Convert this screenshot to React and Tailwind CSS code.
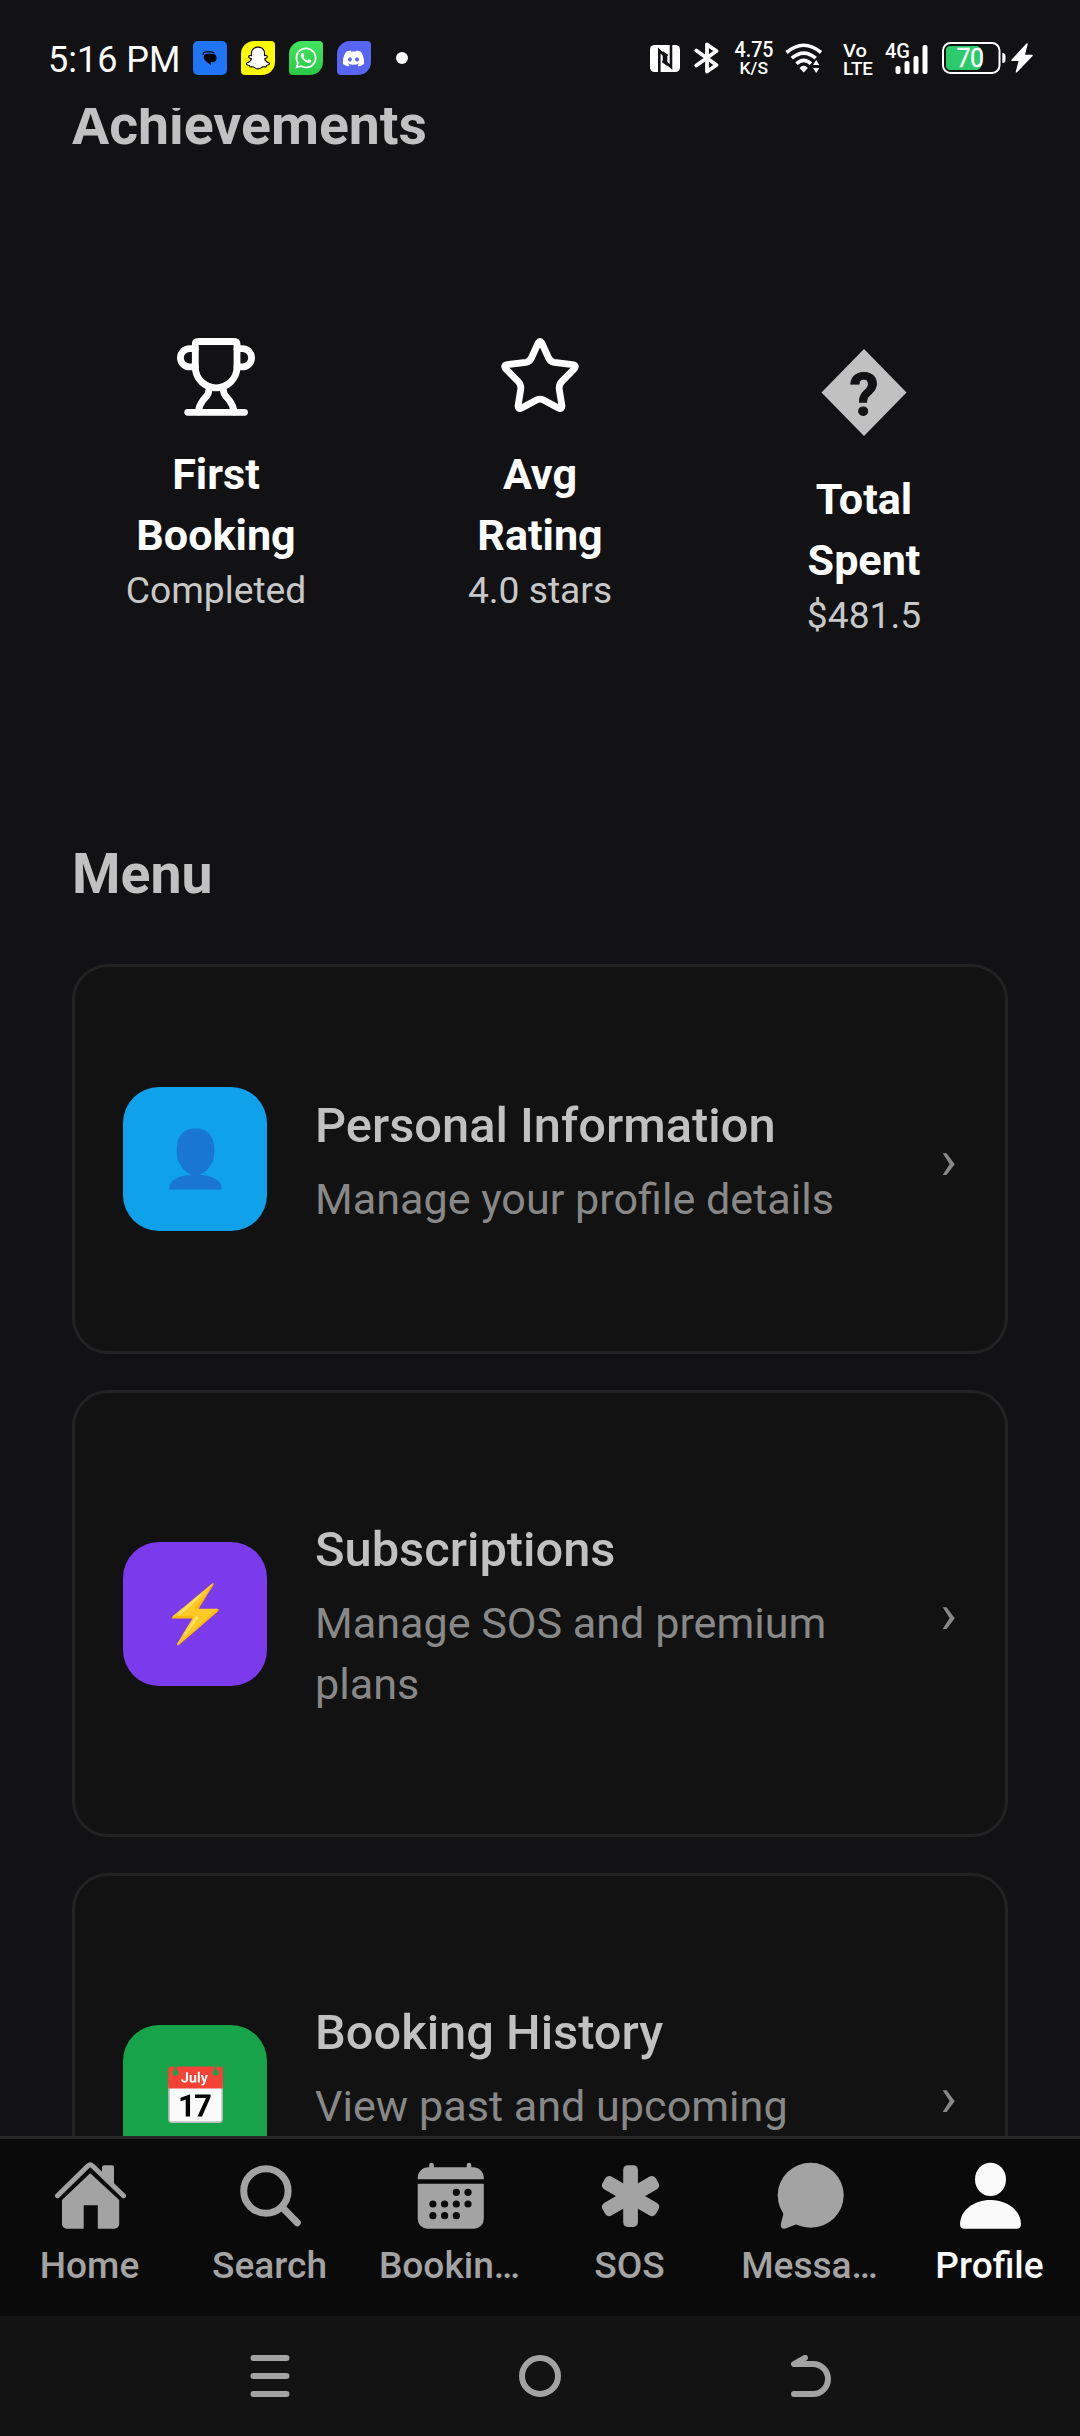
import React from "react";
import { FaSnapchatGhost, FaWhatsapp, FaDiscord } from "react-icons/fa";

function NfcIcon() {
  return (
    <svg width="30" height="27" viewBox="0 0 30 27">
      <rect width="30" height="27" rx="4.5" fill="#fff" />
      <path d="M9.3 27V5.5L16 12V18.500L12.500 16" fill="none" stroke="#121214" strokeWidth="2.600" />
      <path d="M21 0V22L14 16V8.500L17.500 11" fill="none" stroke="#121214" strokeWidth="2.600" />
    </svg>
  );
}

function BluetoothIcon() {
  return (
    <svg width="25" height="32" viewBox="0 0 25 32" fill="none" stroke="#fff" strokeWidth="3.8" strokeLinejoin="round" strokeLinecap="round">
      <path d="M2.300 8.500L22.500 23L13 29.500V2.500L22.500 9L2.300 23.500" />
    </svg>
  );
}

function SpeedLabel() {
  return (
    <svg width="40" height="34" viewBox="0 0 40 34" fill="#fff" className="overflow-visible font-[Roboto] font-medium">
      <text x="0.500" y="15.500" fontSize="21.5" textLength="39" lengthAdjust="spacingAndGlyphs">4.75</text>
      <text x="5.500" y="33.300" fontSize="16.5" textLength="28.500" lengthAdjust="spacingAndGlyphs">K/S</text>
    </svg>
  );
}

function WifiIcon() {
  return (
    <svg width="38" height="30" viewBox="0 0 38 30" fill="none" stroke="#fff" strokeWidth="3.6">
      <path d="M1.500 9.500Q18.700 -5 36 9.500" />
      <path d="M6.800 15.200Q18.700 5 30.700 15.200" />
      <path d="M11.500 20.800Q18.700 14 26 20.800" />
      <path d="M14.500 25Q18.700 20.500 22.900 25L18.700 29.500Z" fill="#fff" stroke="none" />
      <path d="M28 22L31.200 17L34.400 22ZM28 25L31.200 30L34.400 25Z" fill="#fff" stroke="none" />
    </svg>
  );
}

function VolteLabel() {
  return (
    <svg width="30" height="34" viewBox="0 0 30 34" fill="#fff" className="overflow-visible font-[Roboto] font-medium">
      <text x="0" y="15.700" fontSize="19" textLength="24" lengthAdjust="spacingAndGlyphs">Vo</text>
      <text x="0" y="34" fontSize="19" textLength="30" lengthAdjust="spacingAndGlyphs">LTE</text>
    </svg>
  );
}

function SignalIcon() {
  return (
    <svg width="43" height="32" viewBox="0 0 43 32" fill="#fff" className="overflow-visible font-[Roboto] font-medium">
      <text x="0" y="15.500" fontSize="20.5" textLength="25" lengthAdjust="spacingAndGlyphs">4G</text>
      <rect x="10.500" y="24" width="5" height="8" rx="2" />
      <rect x="19.500" y="19" width="5" height="13" rx="2" />
      <rect x="28.500" y="14" width="5" height="18" rx="2" />
      <rect x="37.500" y="3" width="5" height="29" rx="2" />
    </svg>
  );
}

function BatteryIcon() {
  return (
    <svg width="64" height="32" viewBox="0 0 64 32" className="overflow-visible">
      <rect x="1" y="1" width="56.500" height="30" rx="7.500" fill="none" stroke="#fff" strokeWidth="2" />
      <path d="M8.500 4H35Q39.500 5 39.500 10V22Q39.500 27 35 28H8.500Q4 28 4 23.500V8.500Q4 4 8.500 4Z" fill="#2bcb6b" />
      <path d="M60.300 11Q63.500 11 63.500 14V18Q63.500 21 60.300 21Z" fill="#fff" />
      <text x="14.500" y="24.800" fontSize="25" textLength="27.500" fill="#fff" stroke="#fff" strokeWidth="0.300" className="font-[Roboto] font-normal">70</text>
    </svg>
  );
}

function ChargeIcon() {
  return (
    <svg width="22" height="30" viewBox="0 0 22 30" fill="#fff" stroke="#fff" strokeWidth="1.500" strokeLinejoin="round">
      <path d="M16 1L1 17.300H8.500L5.500 28.800L21 12.500H13Z" />
    </svg>
  );
}

function ChatBadge() {
  return (
    <svg width="15" height="15" viewBox="0 0 16 16">
      <path d="M1 4Q1 1 4.500 1H10Q12 1.300 13 2.500" fill="none" stroke="#000" strokeWidth="1.300" />
      <path d="M6 3H11Q15.500 3.500 15.500 7.500Q15.500 11.500 11 12H9.500V15L5.500 12Q2 10 1.600 6.500Q2 3 6 3Z" fill="#000" />
    </svg>
  );
}

function StatusBar() {
  return (
    <header className="flex h-[108px] shrink-0 items-center pt-2 pl-[48px] pr-[47.5px] text-white">
      <span className="mt-[3px] w-[145px] text-[36px] leading-none">5:16 PM</span>
      <div className="flex gap-[14.5px]">
        <div className="flex size-[33.5px] items-center justify-center rounded-[5px] bg-[#1f75f5]"><ChatBadge /></div>
        <div className="flex size-[33.5px] items-center justify-center rounded-tl-[13px] rounded-tr-[4px] rounded-br-[13px] rounded-bl-[4px] bg-[#fffc00]">
          <FaSnapchatGhost size={22} fill="#fff" stroke="#000" strokeWidth="50" overflow="visible" style={{ paintOrder: "stroke" }} />
        </div>
        <div className="flex size-[33.5px] items-center justify-center rounded-tl-[13px] rounded-tr-[4px] rounded-br-[13px] rounded-bl-[4px] bg-linear-to-b from-[#43e660] to-[#2ac847]">
          <FaWhatsapp size={24} />
        </div>
        <div className="flex size-[33.5px] items-center justify-center rounded-tl-[13px] rounded-tr-[4px] rounded-br-[13px] rounded-bl-[4px] bg-[#5865f2]">
          <FaDiscord size={23} />
        </div>
      </div>
      <div className="ml-[25px] size-3 rounded-full bg-white" />
      <div className="ml-auto flex items-center">
        <NfcIcon />
        <div className="ml-[13.5px]"><BluetoothIcon /></div>
        <div className="ml-[15px]"><SpeedLabel /></div>
        <div className="ml-[11.5px]"><WifiIcon /></div>
        <div className="ml-5"><VolteLabel /></div>
        <div className="ml-[11.5px]"><SignalIcon /></div>
        <div className="ml-[14px]"><BatteryIcon /></div>
        <div className="ml-[5px]"><ChargeIcon /></div>
      </div>
    </header>
  );
}

function TrophyIcon() {
  return (
    <svg width="78" height="78" viewBox="0 0 78 78" fill="none" stroke="#fff" strokeWidth="6.800" strokeLinecap="round" strokeLinejoin="round">
      <path d="M21.300 3.500H57.100Q60 3.500 60 6.500V29A20.850 20.850 0 0 1 18.300 29V6.500Q18.300 3.500 21.300 3.500Z" />
      <path d="M18.300 10.700H12.500A9.100 9.100 0 0 0 12.500 28.900H18.300" />
      <path d="M60 10.700H65.500A9.100 9.100 0 0 1 65.500 28.900H60" />
      <path d="M32 51.500C32 57.500 28.500 59 26 62.300S21.800 69 21.300 74" />
      <path d="M46.300 51.500C46.300 57.500 49.800 59 52.300 62.300S56.500 69 57 74" />
      <path d="M10.700 74.300H67.500" />
    </svg>
  );
}

function StarIcon() {
  return (
    <svg width="78" height="78" viewBox="0 0 78 78" fill="none" stroke="#fff" strokeWidth="6.800" strokeLinejoin="round">
      <path d="M37.200 5Q39 2 40.800 5L47.600 20Q49.200 23.600 53.200 24.300L71.500 26.600Q76.300 27.400 73 31.200L60.800 43.500Q57.800 46.600 58.200 51L60.900 67.500Q61.300 71.800 57.300 70L42.500 62Q39 60.300 35.500 62L20.700 70Q16.700 71.800 17.100 67.500L19.800 51Q20.200 46.600 17.200 43.500L5 31.200Q1.700 27.400 6.500 26.600L24.800 24.300Q28.800 23.600 30.400 20Z" />
    </svg>
  );
}

function UnknownIcon() {
  return (
    <svg width="86" height="87" viewBox="0 0 86 87" className="mt-[11px] mb-[5px] overflow-visible">
      <path d="M43 0L85.500 43.500L43 87L0.500 43.500Z" fill="#c1c1c1" />
      <text x="43" y="66" fontSize="58.5" textAnchor="middle" fill="#121214" stroke="#121214" strokeWidth="0.800" className="font-[Roboto] font-bold">?</text>
    </svg>
  );
}

const achievements = [
  { Icon: TrophyIcon, lines: ["First", "Booking"], value: "Completed" },
  { Icon: StarIcon, lines: ["Avg", "Rating"], value: "4.0 stars" },
  { Icon: UnknownIcon, lines: ["Total", "Spent"], value: "$481.5" },
];

function Achievement({ Icon, lines, value }) {
  return (
    <div className="flex flex-col items-center">
      <Icon />
      <div className="mt-[28px] text-center text-[43.1px] leading-[61px] font-bold text-white">
        {lines[0]}
        <br />
        {lines[1]}
      </div>
      <div className="mt-px mb-px text-[37.2px] leading-[46px] text-[#c8c8c8]">{value}</div>
    </div>
  );
}

const menu = [
  { emoji: "👤", tile: "bg-[#0fa1e9]", height: "h-[390px]", title: "Personal Information", text: "Manage your profile details" },
  { emoji: "⚡", tile: "bg-[#7c3aed]", height: "h-[447px]", title: "Subscriptions", text: "Manage SOS and premium plans" },
  { emoji: "📅", tile: "bg-[#17a34a]", height: "h-[447px]", title: "Booking History", text: "View past and upcoming sessions" },
];

function MenuCard({ emoji, tile, height, title, text }) {
  return (
    <div className={"flex shrink-0 items-center rounded-[36px] border-[3px] border-[#222222] bg-[#121212] px-12 " + height}>
      <div className={"flex size-36 shrink-0 items-center justify-center rounded-[36px] pt-[2px] text-[55.5px] leading-none " + tile}>{emoji}</div>
      <div className="ml-12 w-[560px]">
        <div className="text-[48.8px] leading-[74px] font-medium text-[#c1c1c1]">{title}</div>
        <div className="mt-1.5 text-[43.15px] leading-[61px] text-[#888888]">{text}</div>
      </div>
      <div className="ml-auto pt-[3px] text-[55.5px] leading-none text-[#888888]">›</div>
    </div>
  );
}

function HomeIcon() {
  return (
    <svg width="72" height="72" viewBox="0 0 72 72" fill="currentColor">
      <path d="M36.200 13.300L65.200 40V64A4.700 4.700 0 0 1 60.500 68.700H43.800V45.300H29.700V68.700H12.700A4.700 4.700 0 0 1 8 64V40Z" />
      <path d="M3.500 35.700L33.800 6Q36.200 3.800 38.600 6L69.500 35.700" fill="none" stroke="currentColor" strokeWidth="5" strokeLinecap="round" />
      <path d="M48 16V7.500Q48 5.300 50.200 5.300H57.800Q60 5.300 60 7.500V27Z" />
    </svg>
  );
}

function SearchIcon() {
  return (
    <svg width="72" height="72" viewBox="0 0 72 72" fill="none" stroke="currentColor" strokeWidth="7" strokeLinecap="round">
      <circle cx="31.900" cy="31" r="22.200" />
      <path d="M48.500 47.500L63.300 62.700" />
    </svg>
  );
}

const calendarDots = [[42.3, 32.3], [54, 32.3], [18.9, 44], [30.6, 44], [42.3, 44], [54, 44], [18.9, 55.7], [30.6, 55.7], [42.3, 55.7]];

function CalendarIcon() {
  return (
    <svg width="72" height="72" viewBox="0 0 72 72" fill="currentColor">
      <path d="M3.700 19.300V18A10.500 10.500 0 0 1 14.200 7.300H59.300A10.500 10.500 0 0 1 69.800 18V19.300Z" />
      <path d="M17.500 5V10M55 5V10" stroke="currentColor" strokeWidth="4.600" strokeLinecap="round" />
      <path d="M3.700 23.800H69.800V59A9.700 9.700 0 0 1 60.100 68.700H13.400A9.700 9.700 0 0 1 3.700 59Z" />
      {calendarDots.map(([x, y]) => (
        <circle key={x + "-" + y} cx={x} cy={y} r="3.600" fill="#0a0a0a" />
      ))}
    </svg>
  );
}

function SosIcon() {
  return (
    <svg width="72" height="72" viewBox="0 0 72 72" fill="currentColor">
      <rect x="29.200" y="5.300" width="14.700" height="61.600" rx="4.500" />
      <rect x="29.200" y="5.300" width="14.700" height="61.600" rx="4.500" transform="rotate(60 36.550 36.100)" />
      <rect x="29.200" y="5.300" width="14.700" height="61.600" rx="4.500" transform="rotate(-60 36.550 36.100)" />
    </svg>
  );
}

function MessageIcon() {
  return (
    <svg width="72" height="72" viewBox="0 0 72 72" fill="currentColor">
      <ellipse cx="36.700" cy="35.200" rx="33" ry="32.500" />
      <path d="M8 50L9.500 53.500L6.700 64.500Q6.700 69.600 11.500 68.600L22.500 64.300L30 64Z" />
    </svg>
  );
}

function ProfileIcon() {
  return (
    <svg width="72" height="72" viewBox="0 0 72 72" fill="currentColor">
      <ellipse cx="36.500" cy="19.400" rx="15.500" ry="16.700" />
      <path d="M6 64C6.500 50 20 40 36.500 40S66.500 50 67 64Q67 68.700 62.500 68.700H10.500Q6 68.700 6 64Z" />
    </svg>
  );
}

const tabs = [
  { Icon: HomeIcon, label: "Home" },
  { Icon: SearchIcon, label: "Search" },
  { Icon: CalendarIcon, label: "Bookin…" },
  { Icon: SosIcon, label: "SOS" },
  { Icon: MessageIcon, label: "Messa…" },
  { Icon: ProfileIcon, label: "Profile", active: true },
];

function TabBar() {
  return (
    <nav className="grid h-[180px] shrink-0 grid-cols-6 border-t-[3px] border-[#262626] bg-[#0a0a0a]">
      {tabs.map(({ Icon, label, active }) => (
        <div key={label} className={"flex flex-col items-center pt-[21px] " + (active ? "text-[#fafafa]" : "text-[#a3a3a3]")}>
          <Icon />
          <span className="mt-[10px] mr-px text-[37.1px] leading-[48px] font-medium">{label}</span>
        </div>
      ))}
    </nav>
  );
}

function SystemBar() {
  return (
    <footer className="flex h-[120px] shrink-0 items-center justify-center gap-[228px] bg-[#131313]">
      <svg width="42" height="42" viewBox="0 0 42 42" stroke="#a3a3a3" strokeWidth="6" strokeLinecap="round">
        <path d="M4.500 3H37.500M4.500 21H37.500M4.500 39H37.500" />
      </svg>
      <svg width="42" height="42" viewBox="0 0 42 42" fill="none" stroke="#a3a3a3" strokeWidth="6">
        <circle cx="21" cy="21" r="18" />
      </svg>
      <svg width="42" height="42" viewBox="0 0 42 42" fill="none" stroke="#a3a3a3" strokeWidth="6" strokeLinecap="round" strokeLinejoin="round">
        <path d="M16 2.800L5 9H24A15 15 0 0 1 24 39H5" />
      </svg>
    </footer>
  );
}

export default function App() {
  return (
    <div className="flex h-[2436px] w-[1080px] flex-col overflow-hidden bg-[#121214] font-[Roboto,sans-serif]">
      <StatusBar />
      <main className="flex min-h-0 flex-1 flex-col overflow-hidden">
        <h2 className="-mt-[15px] shrink-0 px-[72px] text-[55.4px] leading-[66px] font-bold text-[#c1c1c1]">Achievements</h2>
        <section className="mt-[179px] grid shrink-0 grid-cols-3 px-[54px]">
          {achievements.map((item) => (
            <Achievement key={item.value} {...item} />
          ))}
        </section>
        <h2 className="mt-[203px] shrink-0 px-[72px] text-[55.4px] leading-[66px] font-bold text-[#c1c1c1]">Menu</h2>
        <section className="mt-[56px] flex flex-col gap-9 px-[72px]">
          {menu.map((item) => (
            <MenuCard key={item.title} {...item} />
          ))}
        </section>
      </main>
      <TabBar />
      <SystemBar />
    </div>
  );
}
